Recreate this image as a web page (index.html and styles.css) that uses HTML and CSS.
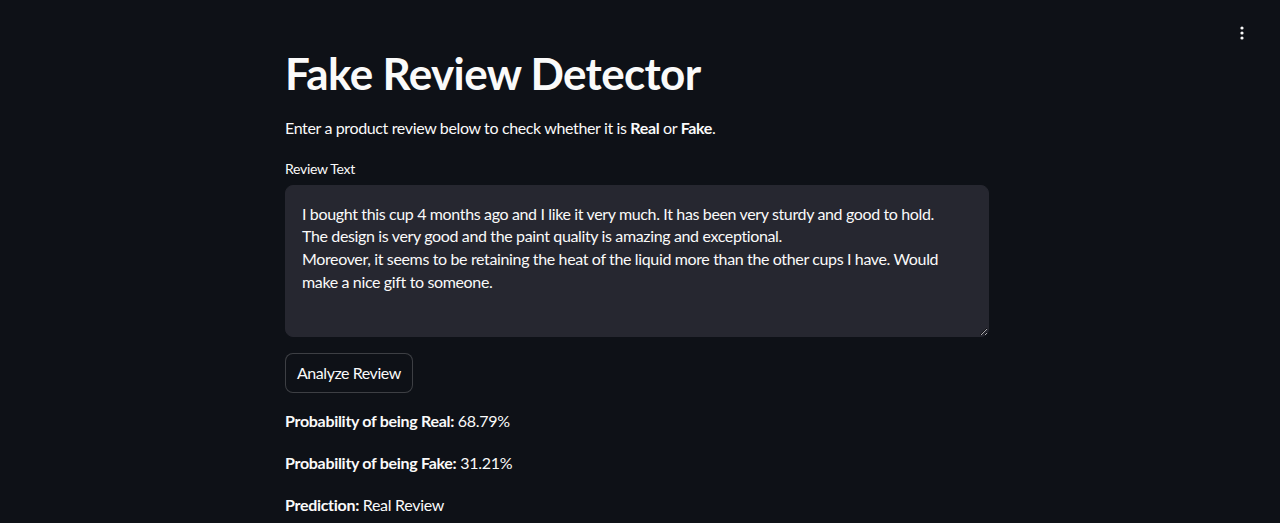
FILE: index.html
```html
<!DOCTYPE html>
<html lang="en">
<head>
<meta charset="utf-8">
<title>Fake Review Detector</title>
<link rel="stylesheet" href="styles.css">
</head>
<body>
<header class="topbar">
  <button class="menu" aria-label="Main menu">
    <svg width="4" height="14" viewBox="0 0 4 14"><circle cx="2" cy="2" r="1.6" fill="#fafafa"/><circle cx="2" cy="7" r="1.6" fill="#fafafa"/><circle cx="2" cy="12" r="1.6" fill="#fafafa"/></svg>
  </button>
</header>
<main class="container">
  <h1 class="title">Fake Review Detector</h1>
  <p class="intro">Enter a product review below to check whether it is <strong>Real</strong> or <strong>Fake</strong>.</p>
  <label class="label" for="review">Review Text</label>
  <textarea id="review" class="review">I bought this cup 4 months ago and I like it very much. It has been very sturdy and good to hold.
The design is very good and the paint quality is amazing and exceptional.
Moreover, it seems to be retaining the heat of the liquid more than the other cups I have. Would make a nice gift to someone.</textarea>
  <button class="analyze">Analyze Review</button>
  <p class="result"><strong>Probability of being Real:</strong> 68.79%</p>
  <p class="result"><strong>Probability of being Fake:</strong> 31.21%</p>
  <p class="result"><strong>Prediction:</strong> Real Review</p>
</main>
</body>
</html>
```
FILE: styles.css
```css
html, body {
  margin: 0;
  padding: 0;
  background: #0e1117;
  color: #fafafa;
  font-family: "Source Sans Pro", Lato, "Noto Sans", sans-serif;
  letter-spacing: -0.3px;
  height: 100%;
  overflow: hidden;
}
.topbar {
  position: absolute;
  top: 0;
  right: 0;
  display: flex;
  padding: 24px 32px 0 0;
}
.menu {
  background: none;
  border: 0;
  padding: 2px 4px;
  display: flex;
}
.container {
  width: 704px;
  margin-left: 285px;
  padding-top: 47px;
  display: flex;
  flex-direction: column;
  align-items: flex-start;
}
.title {
  margin: 0;
  font-size: 44px;
  font-weight: 700;
  line-height: 1.2;
  letter-spacing: -0.65px;
}
.intro {
  margin: 16px 0 0;
  font-size: 16px;
  line-height: 24px;
  letter-spacing: -0.36px;
}
.label {
  margin-top: 19px;
  font-size: 14px;
  line-height: 20px;
}
.review {
  margin-top: 6px;
  box-sizing: border-box;
  width: 704px;
  height: 152px;
  background: #262730;
  color: #fafafa;
  border: 1px solid #262730;
  border-radius: 8px;
  padding: 17px 16px 16px;
  font-family: inherit;
  font-size: 16px;
  letter-spacing: -0.36px;
  line-height: 22.6px;
  resize: vertical;
  outline: none;
}
.analyze {
  margin-top: 16px;
  background: #0e1117;
  color: #fafafa;
  border: 1px solid rgba(250,250,250,0.2);
  border-radius: 8px;
  padding: 0 11px;
  height: 40px;
  font-family: inherit;
  font-size: 16px;
  letter-spacing: -0.45px;
}
.result {
  margin: 16px 0 0;
  font-size: 16px;
  line-height: 24px;
}
.result + .result {
  margin-top: 18px;
}
```
